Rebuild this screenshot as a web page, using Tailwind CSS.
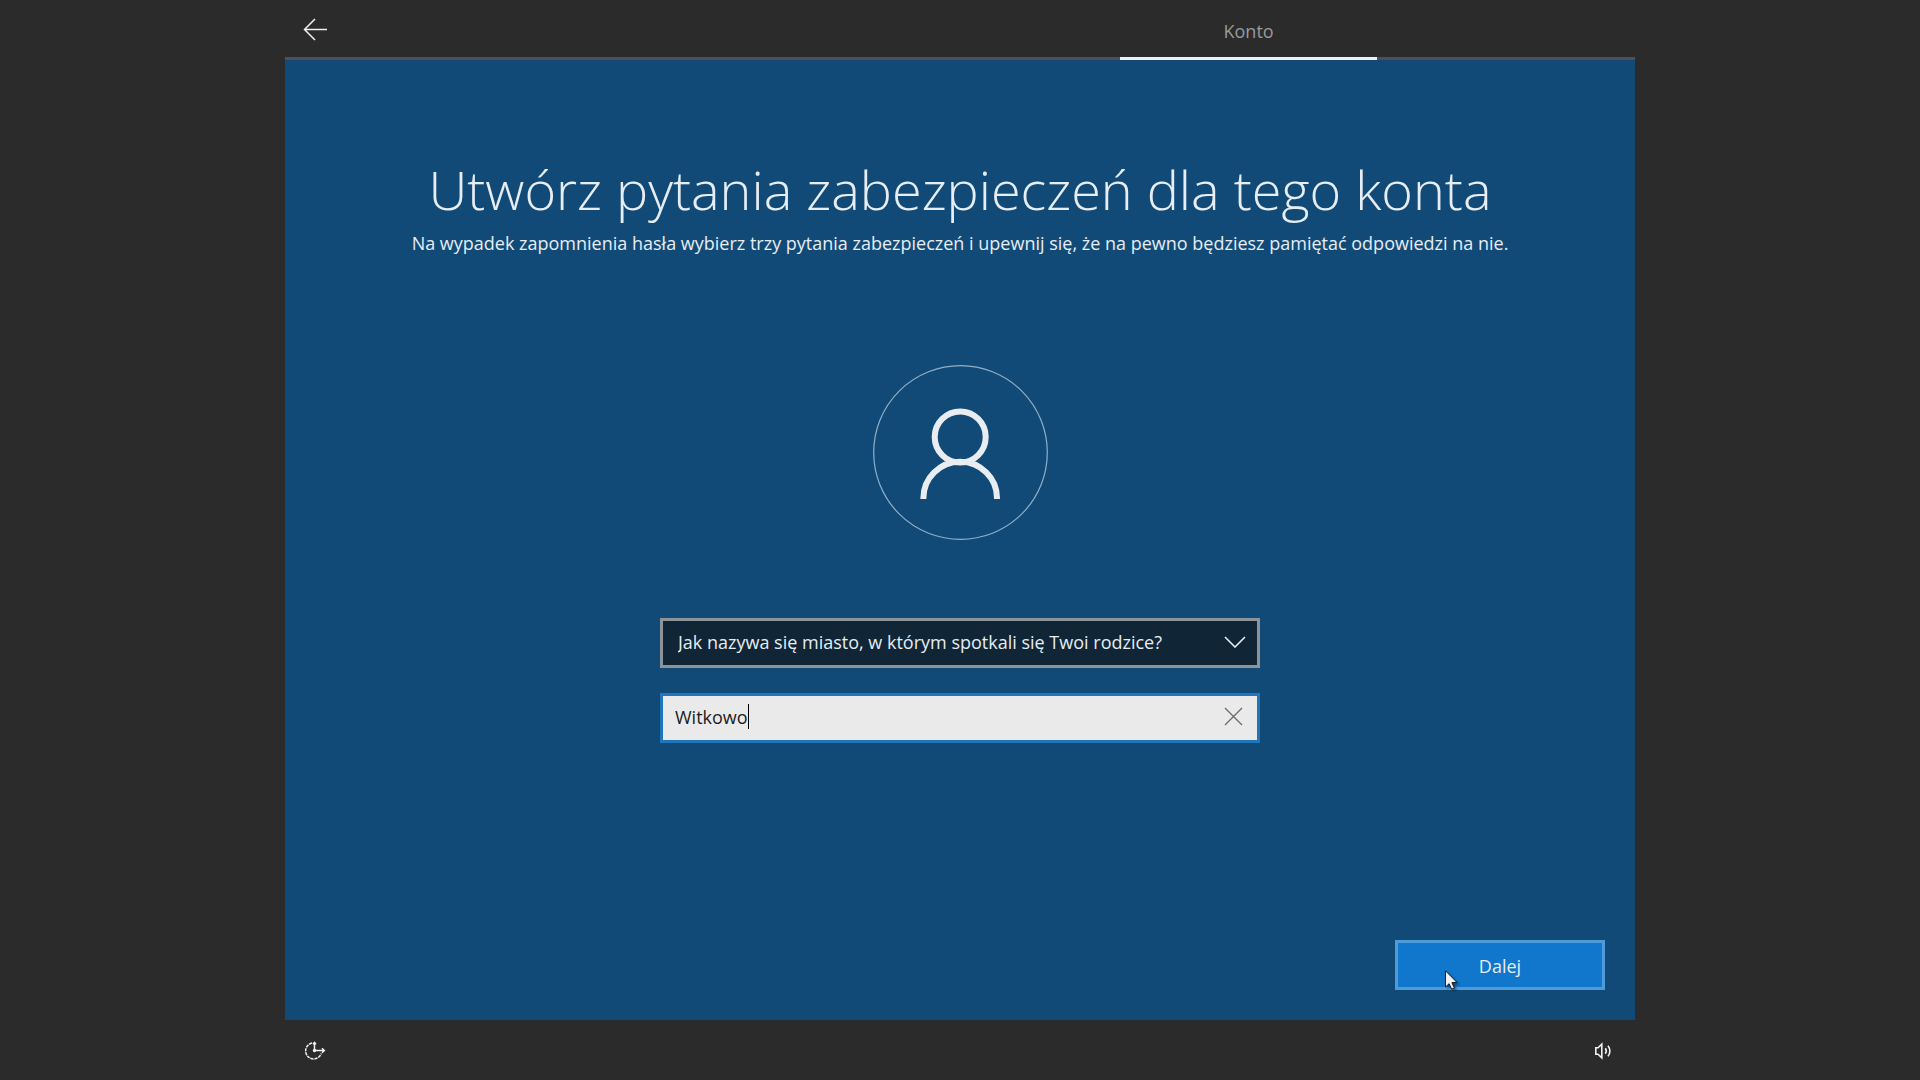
<!DOCTYPE html>
<html lang="pl">
<head>
<meta charset="utf-8">
<meta name="viewport" content="width=device-width, initial-scale=1">
<title>Utwórz pytania zabezpieczeń dla tego konta</title>
<script src="https://cdn.jsdelivr.net/npm/@tailwindcss/browser@4"></script>
</head>
<body class="min-h-screen bg-[#2b2b2b] font-['Segoe_UI','Open_Sans',sans-serif] text-lg leading-6 text-[#e6edf3]">
<div class="mx-auto flex min-h-screen w-full max-w-[1350px] flex-col">

  <header class="flex h-[60px] shrink-0 border-b-3 border-[#4d5156]">
    <button type="button" aria-label="Wstecz" class="flex w-[62px] items-center pl-[18px]">
      <svg class="h-6 w-6" viewBox="0 0 24 24" fill="none" stroke="#f0f0f0" stroke-width="1.5"><path d="M24 12.5H1.5M12 2 1.5 12.5 12 23"/></svg>
    </button>
    <nav class="grid flex-1 grid-cols-5" aria-label="Etapy">
      <a href="#konto" aria-current="step" class="col-start-4 -mb-[3px] flex items-center justify-center border-b-3 border-[#eef0f8] pt-1 text-[#9a9a9a]">Konto</a>
    </nav>
  </header>

  <main class="flex flex-1 flex-col items-center bg-[#124a77] px-[30px] pb-[30px]">
    <h1 class="pt-[89px] text-center text-[54px] leading-20 font-light">Utwórz pytania zabezpieczeń dla tego konta</h1>
    <p class="pt-0.5 text-center">Na wypadek zapomnienia hasła wybierz trzy pytania zabezpieczeń i upewnij się, że na pewno będziesz pamiętać odpowiedzi na nie.</p>

    <svg class="mt-[110px] h-[175px] w-[175px] shrink-0" viewBox="0 0 175 175" fill="none" aria-hidden="true">
      <circle cx="87.5" cy="87.5" r="86.8" stroke="#8fafc8" stroke-width="1.2"/>
      <circle cx="87.2" cy="72" r="25.5" stroke="#e9ecf1" stroke-width="6"/>
      <path d="M50.400 134V133a36.800 36.300 0 0 1 73.600 0V134" stroke="#e9ecf1" stroke-width="6"/>
    </svg>

    <form class="mt-[78px] flex w-full flex-1 flex-col items-center">
      <div class="relative w-full max-w-[600px]">
        <select aria-label="Pytanie zabezpieczające" class="h-[50px] w-full appearance-none rounded-none border-3 border-[#8b949b] bg-[#102536] pr-14 pb-0.5 pl-[15px] text-[#e6edf3]">
          <option>Jak nazywa się miasto, w którym spotkali się Twoi rodzice?</option>
        </select>
        <svg class="pointer-events-none absolute top-[18px] right-[14px] h-3 w-[22px]" viewBox="0 0 22 12" fill="none" stroke="#e6edf3" stroke-width="1.6"><path d="M1 1 11 11 21 1"/></svg>
      </div>
      <div class="relative mt-[25px] w-full max-w-[600px]">
        <input type="text" aria-label="Odpowiedź" value="Witkowo" class="h-[50px] w-full border-3 border-[#2176bb] bg-[#eaeaea] pr-14 pb-0.5 pl-3 text-[#1c1c1c] caret-transparent outline-none">
        <span class="absolute top-[11px] left-[88px] h-[25px] w-px bg-black"></span>
        <button type="button" aria-label="Wyczyść" class="absolute top-[14px] right-[17px]">
          <svg class="h-[19px] w-[19px]" viewBox="0 0 19 19" fill="none" stroke="#6b6b70" stroke-width="1.3"><path d="m1 1 17 17M18 1 1 18"/></svg>
        </button>
      </div>
      <div class="relative mt-auto self-end">
        <button type="button" class="h-[50px] w-[210px] border-3 border-[#4f9ad8] bg-[#1177cc] pt-px">Dalej</button>
        <svg class="pointer-events-none absolute top-[30px] left-[49px] h-[22px] w-4 drop-shadow-[2px_2px_1px_rgba(0,0,0,0.4)]" viewBox="0 0 16 22"><path d="M1.500 .8v16.200l3.600-3.300 2.600 5.500 2.700-1.200-2.500-5.300 5-.4z" fill="#f2f2f2" stroke="#0b1a2b" stroke-width="1"/></svg>
      </div>
    </form>
  </main>

  <footer class="flex h-[60px] shrink-0 items-center justify-between pt-0.5 pr-[22px] pl-[19px]">
    <button type="button" aria-label="Ułatwienia dostępu">
      <svg class="h-[22px] w-[22px]" viewBox="0 0 22 22" fill="none" stroke="#f0f0f0" stroke-width="1.5"><path d="M8 3.100A8 8 0 1 0 17.200 13.500" stroke-dasharray="3.200 .8"/><path d="M10.500 2.500V10.500H20M18 8.300 20.300 10.500 18 12.700M9 4.300 10.500 2.500 12 4.300"/><circle cx="10.500" cy="10.500" r="1" fill="#f0f0f0"/></svg>
    </button>
    <button type="button" aria-label="Głośność">
      <svg class="h-5 w-[19px]" viewBox="0 0 19 20" fill="none" stroke="#f0f0f0" stroke-width="1.600"><path d="M1.800 6.800v6.400h2.200L7.800 16.800V3.200L4 6.800zM11.300 7.300q2 2.700 0 5.400M14 4.700q3.800 5.300 0 10.600"/></svg>
    </button>
  </footer>
</div>
</body>
</html>
